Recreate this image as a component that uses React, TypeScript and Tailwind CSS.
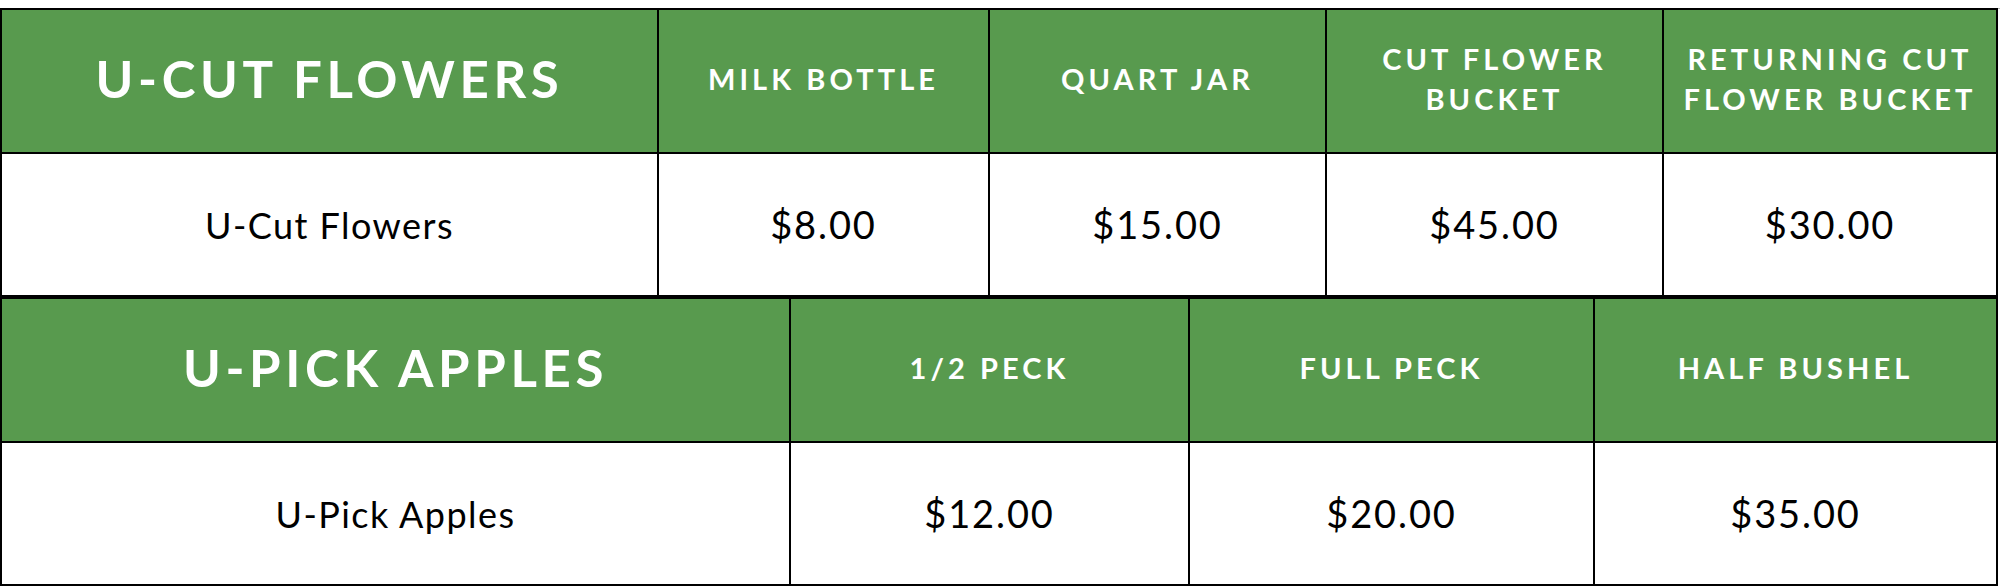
import React from 'react';

interface PriceTableProps {
  title: string;
  label: string;
  cols: string;
  headers: string[];
  prices: string[];
  className?: string;
}

const font = { fontFamily: 'Lato, "Noto Sans", sans-serif' };

const PriceTable: React.FC<PriceTableProps> = ({ title, label, cols, headers, prices, className }) => {
  return (
    <div className={`w-[1998px] border-2 border-black ${className ?? ''}`}>
      <div className={`grid ${cols} h-[144px] border-b-2 border-black bg-[#589a4e] text-white`}>
        <div className="flex items-center justify-center pb-[5px]">
          <h2 className="text-[51px] font-bold tracking-[0.09em] leading-none">{title}</h2>
        </div>
        {headers.map((h) => (
          <div key={h} className="flex items-center justify-center border-l-2 border-black px-3 pb-[5px]">
            <span className="text-center text-[29px] font-bold tracking-[0.14em] leading-[40px] whitespace-pre-line">
              {h}
            </span>
          </div>
        ))}
      </div>
      <div className={`grid ${cols} h-[141px] bg-white text-black`}>
        <div className="flex items-center justify-center">
          <span className="text-[36px] tracking-[0.04em]">{label}</span>
        </div>
        {prices.map((p, i) => (
          <div key={i} className="flex items-center justify-center border-l-2 border-black">
            <span className="text-[38px] tracking-[0.05em]">{p}</span>
          </div>
        ))}
      </div>
    </div>
  );
};

export default function App() {
  return (
    <div className="w-[2000px] h-[588px] bg-white pt-[8px] overflow-hidden" style={font}>
      <div className="border-t border-[#bbbbbb]">
        <PriceTable
          title="U-CUT FLOWERS"
          label="U-Cut Flowers"
          cols="grid-cols-[655px_331px_337px_337px_1fr]"
          headers={['MILK BOTTLE', 'QUART JAR', 'CUT FLOWER\nBUCKET', 'RETURNING CUT\nFLOWER BUCKET']}
          prices={['$8.00', '$15.00', '$45.00', '$30.00']}
          className="-mt-px"
        />
        <PriceTable
          title="U-PICK APPLES"
          label="U-Pick Apples"
          cols="grid-cols-[787px_399px_405px_1fr]"
          headers={['1/2 PECK', 'FULL PECK', 'HALF BUSHEL']}
          prices={['$12.00', '$20.00', '$35.00']}
        />
      </div>
    </div>
  );
}
